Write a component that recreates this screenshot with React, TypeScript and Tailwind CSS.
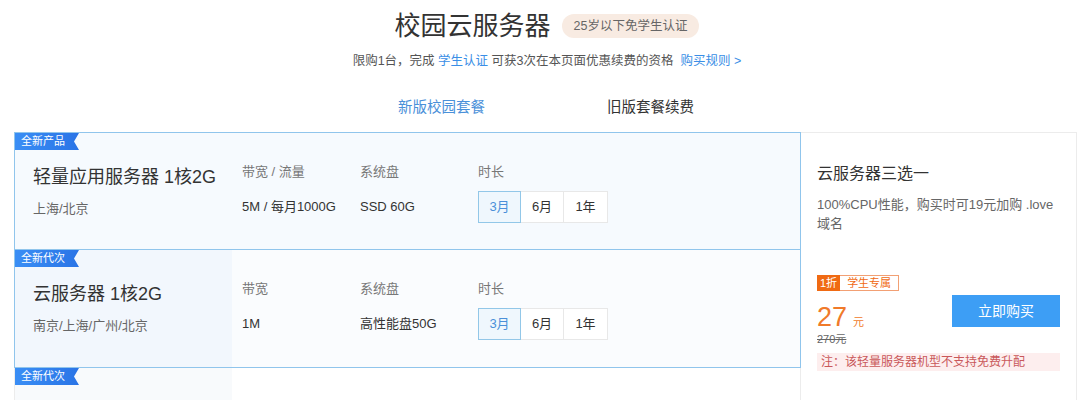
const font = { fontFamily: '"Liberation Sans", "Noto Sans CJK SC", sans-serif' };

type Plan = {
  tag: string;
  name: string;
  region: string;
  cols: { label: string; value: string }[];
  leftBg: string;
  rightBg: string;
  border: string;
};

const plans: Plan[] = [
  {
    tag: "全新产品",
    name: "轻量应用服务器 1核2G",
    region: "上海/北京",
    cols: [
      { label: "带宽 / 流量", value: "5M / 每月1000G" },
      { label: "系统盘", value: "SSD 60G" },
    ],
    leftBg: "bg-[#f6fafe]",
    rightBg: "bg-[#f6fafe]",
    border: "border-[#90c5ec]",
  },
  {
    tag: "全新代次",
    name: "云服务器 1核2G",
    region: "南京/上海/广州/北京",
    cols: [
      { label: "带宽", value: "1M" },
      { label: "系统盘", value: "高性能盘50G" },
    ],
    leftBg: "bg-[#f2f7fd]",
    rightBg: "bg-[#fafcfe]",
    border: "border-[#90c5ec]",
  },
  {
    tag: "全新代次",
    name: "云服务器 2核4G",
    region: "南京/上海/广州/北京",
    cols: [
      { label: "带宽", value: "3M" },
      { label: "系统盘", value: "高性能盘50G" },
    ],
    leftBg: "bg-[#f8fafc]",
    rightBg: "bg-white",
    border: "border-[#ececec]",
  },
];

function Ribbon({ text }: { text: string }) {
  return (
    <div
      className="absolute left-0 top-0 flex h-[17px] items-center bg-gradient-to-r from-[#3a8ef5] to-[#2a74e6] pl-[6px] pr-[14px] text-[11px] leading-none text-white"
      style={{ clipPath: "polygon(0 0, 100% 0, calc(100% - 5px) 50%, 100% 100%, 0 100%)" }}
    >
      {text}
    </div>
  );
}

function PlanRow({ plan, first }: { plan: Plan; first: boolean }) {
  return (
    <div
      className={`relative flex h-[118px] border-x ${first ? "border-y" : "border-b"} ${plan.border} ${plan.rightBg}`}
    >
      <Ribbon text={plan.tag} />
      <div className={`w-[217px] shrink-0 pl-[18px] pt-[32px] ${plan.leftBg}`}>
        <div className="text-[18px] leading-[24px] text-[#333]">{plan.name}</div>
        <div className="mt-[10px] text-[13px] leading-[20px] text-[#666]">{plan.region}</div>
      </div>
      <div className="flex pl-[10px] pt-[29px]">
        {plan.cols.map((c) => (
          <div key={c.label} className="w-[118px]">
            <div className="text-[13px] leading-[20px] text-[#777]">{c.label}</div>
            <div className="mt-[9px] flex h-[32px] items-center text-[13px] text-[#333]">{c.value}</div>
          </div>
        ))}
        <div>
          <div className="text-[13px] leading-[20px] text-[#777]">时长</div>
          <div className="mt-[9px] flex h-[32px] text-[13px]">
            <div className="flex w-[43px] items-center justify-center border border-[#92c7e8] bg-[#eff7fd] text-[#4a90d9]">
              3月
            </div>
            <div className="flex w-[43px] items-center justify-center border border-l-0 border-[#e8e8e8] bg-white text-[#333]">
              6月
            </div>
            <div className="flex w-[44px] items-center justify-center border border-l-0 border-[#e8e8e8] bg-white text-[#333]">
              1年
            </div>
          </div>
        </div>
      </div>
    </div>
  );
}

export default function App() {
  return (
    <div className="h-[400px] w-[1090px] overflow-hidden bg-white" style={font}>
      {/* header */}
      <div className="flex flex-col items-center pt-[9px]">
        <div className="flex items-center pl-[4px]">
          <h1 className="text-[26px] leading-[34px] text-[#333]">校园云服务器</h1>
          <span className="ml-[11px] rounded-full bg-[#f8ebe2] px-[12px] py-[4px] text-[12.5px] leading-[16px] text-[#666]">
            25岁以下免学生认证
          </span>
        </div>
        <p className="mt-[9px] pl-[4px] text-[12.5px] leading-[18px] text-[#555]">
          限购1台，完成 <span className="text-[#3a8ee6]">学生认证</span> 可获3次在本页面优惠续费的资格
          <span className="ml-[7px] text-[#3a8ee6]">购买规则 &gt;</span>
        </p>
      </div>

      {/* tabs */}
      <div className="mt-[27px] flex pl-[398px] text-[14.5px] leading-[20px]">
        <span className="text-[#4a90d9]">新版校园套餐</span>
        <span className="ml-[122px] text-[#333]">旧版套餐续费</span>
      </div>

      {/* plans */}
      <div className="ml-[14px] mt-[15px] flex w-[1063px]">
        <div className="w-[787px] shrink-0">
          {plans.map((p, i) => (
            <PlanRow key={i} plan={p} first={i === 0} />
          ))}
        </div>
        <div className="h-[300px] flex-1 border border-l-0 border-[#ececec] bg-white px-[16px] pt-[29px]">
          <div className="text-[16px] leading-[24px] text-[#333]">云服务器三选一</div>
          <div className="mt-[9px] text-[13px] leading-[19px] text-[#666]">
            100%CPU性能，购买时可19元加购 .love
            <br />
            域名
          </div>
          <div className="mt-[42px] flex items-start justify-between">
            <div>
              <div className="flex h-[16px] text-[11px] leading-none">
                <span className="flex items-center bg-[#f06a13] px-[3px] text-white">1折</span>
                <span className="flex items-center border border-l-0 border-[#f2a074] px-[7px] text-[#f06a13]">
                  学生专属
                </span>
              </div>
              <div className="mt-[10px] flex items-baseline text-[#f07a2a]">
                <span className="text-[27px] leading-[32px]">27</span>
                <span className="ml-[6px] text-[11px]">元</span>
              </div>
              <div className="text-[11px] leading-[12px] text-[#666] line-through">270元</div>
            </div>
            <button className="mt-[20px] h-[32px] w-[108px] bg-[#3d9ef5] text-[14px] text-white">立即购买</button>
          </div>
          <div className="mt-[8px] flex h-[18px] items-center bg-[#fdeeee] px-[4px] text-[12px] text-[#c9585a]">
            注：该轻量服务器机型不支持免费升配
          </div>
        </div>
      </div>
    </div>
  );
}
